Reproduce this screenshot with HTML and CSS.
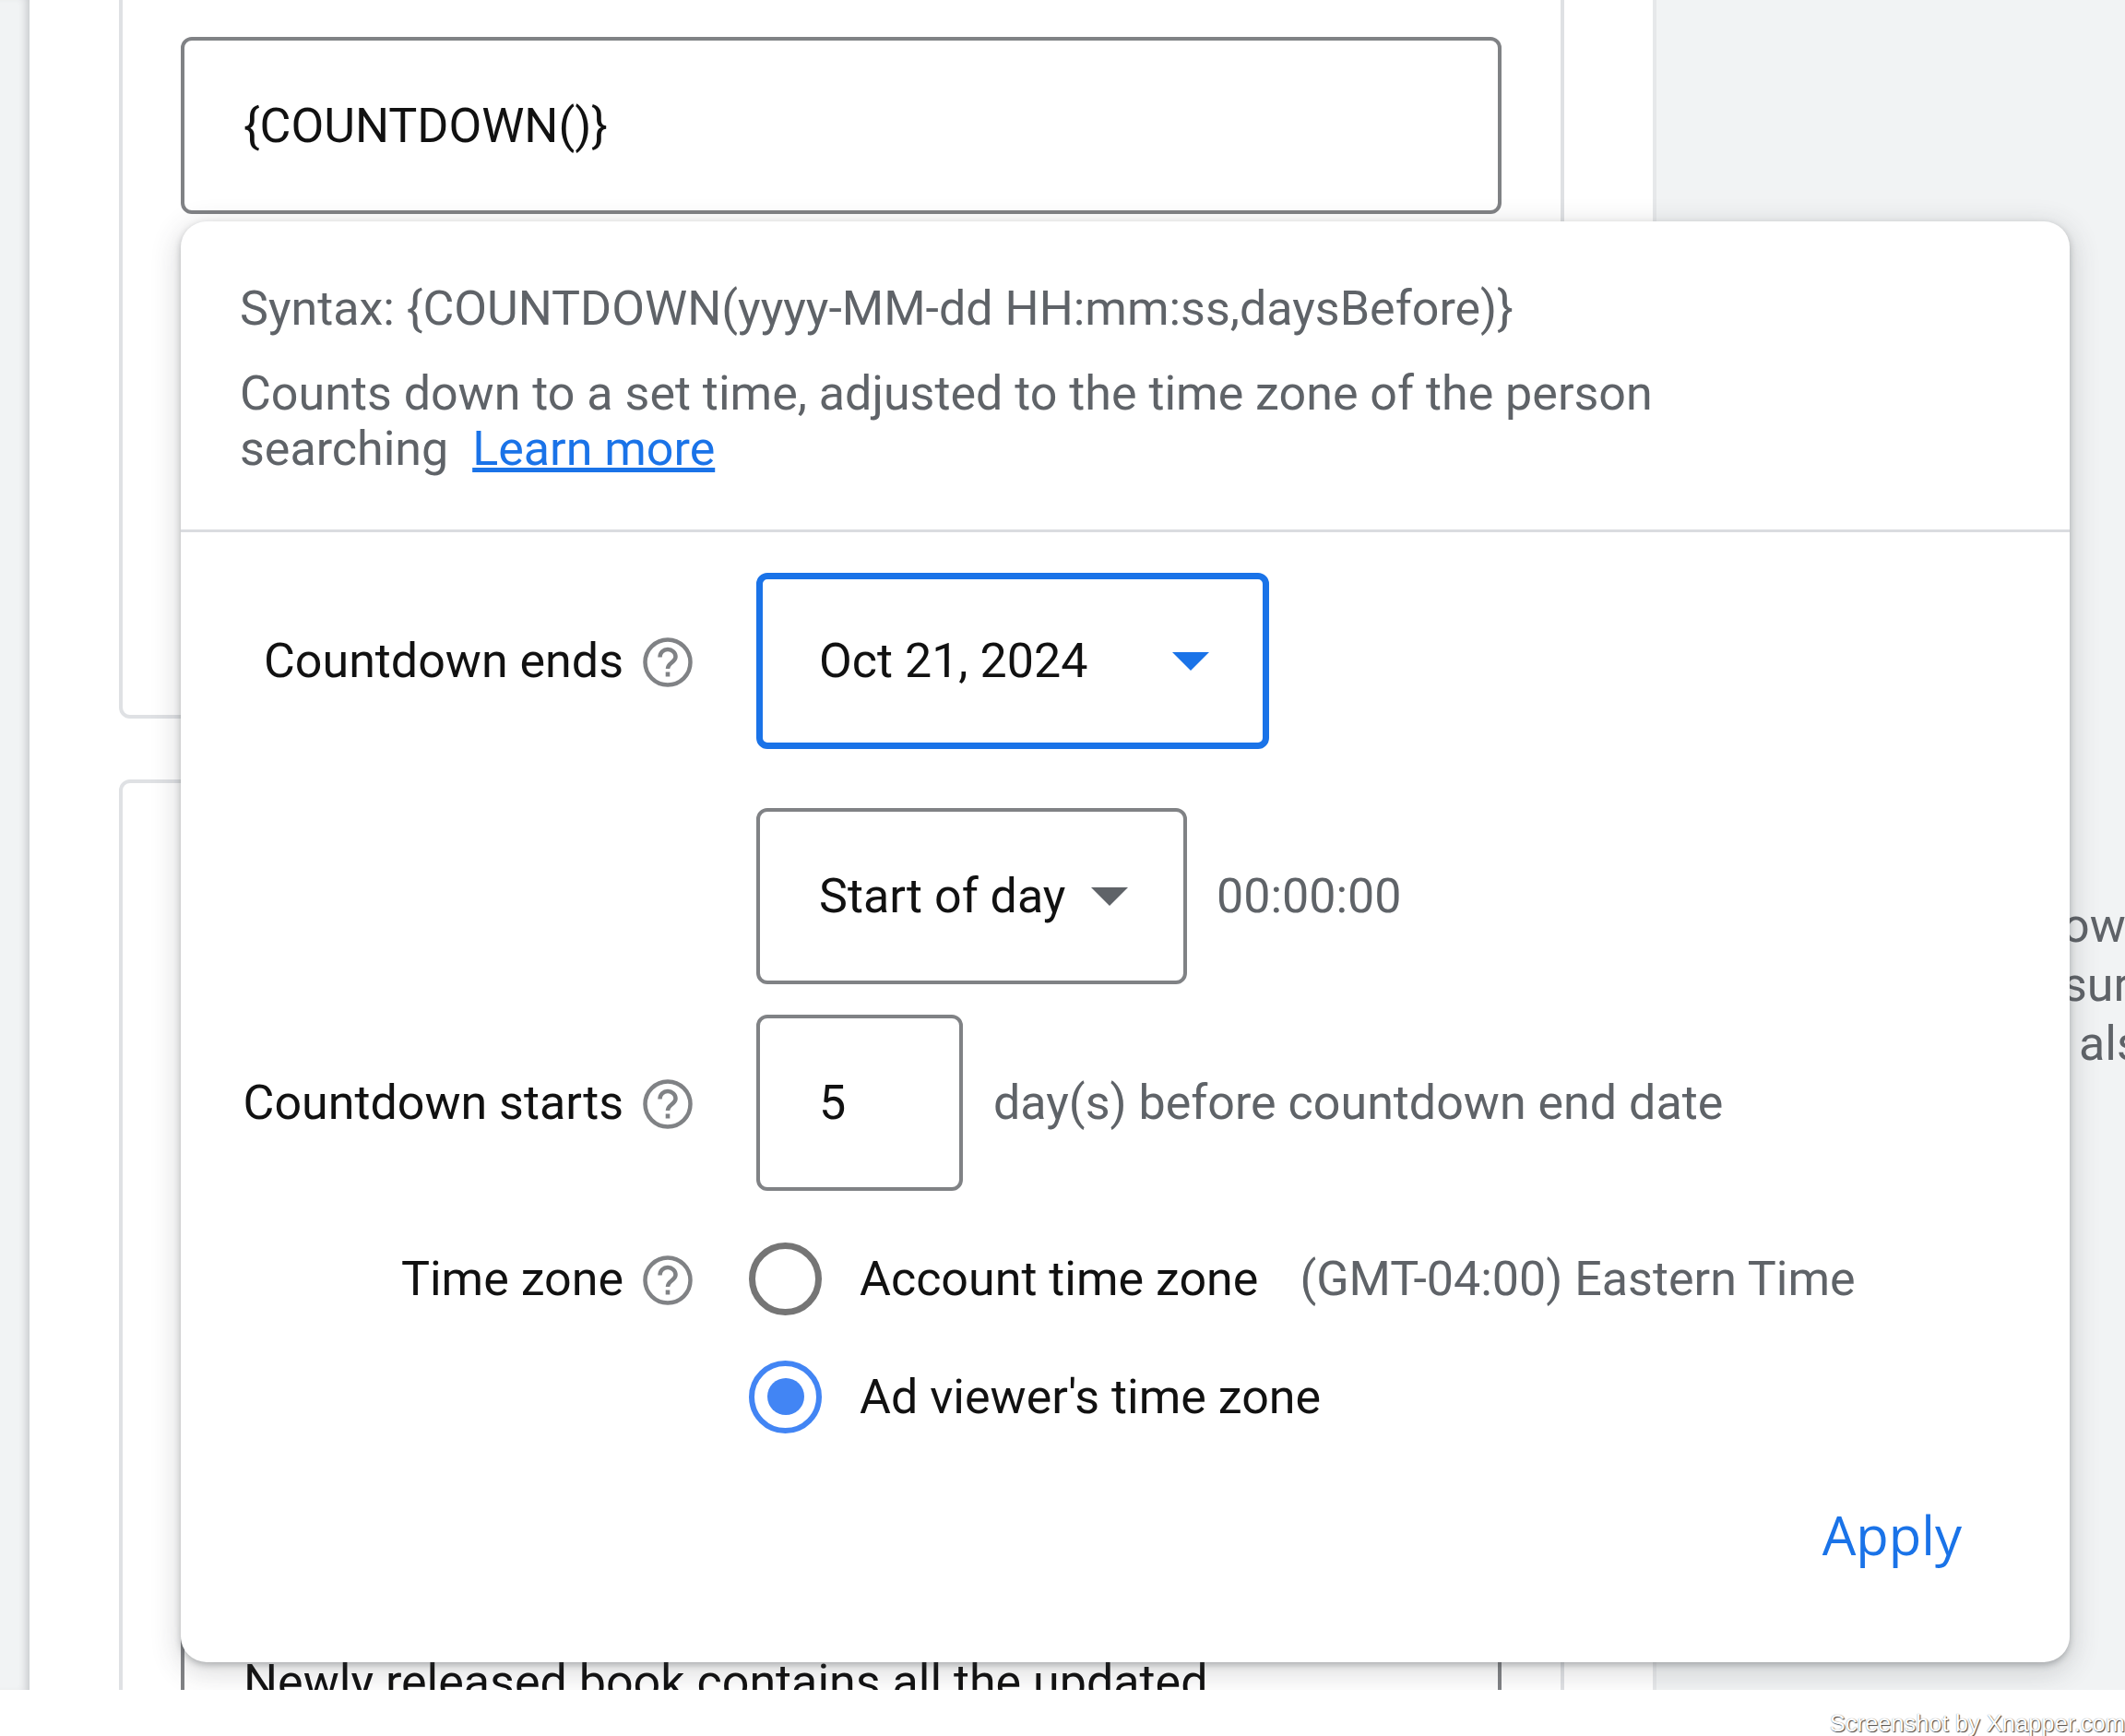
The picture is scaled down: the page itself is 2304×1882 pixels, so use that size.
FILE: index.html
```html
<!DOCTYPE html>
<html lang="en">
<head>
<meta charset="utf-8">
<title>Countdown</title>
<link rel="stylesheet" href="styles.css">
</head>
<body>
<div class="viewport">
  <div class="gutter"></div>
  <main class="main">
    <section class="card card-first">
      <div class="field field-top">{COUNTDOWN()}</div>
    </section>
    <section class="card card-second">
      <div class="field field-bottom">Newly released book contains all the updated</div>
    </section>
  </main>
  <aside class="aside">
    <div>ow</div>
    <div>sur</div>
    <div class="indent">als</div>
  </aside>
  <div class="popup">
    <header class="popup-head">
      <p class="syntax">Syntax: {COUNTDOWN(yyyy-MM-dd HH:mm:ss,daysBefore)}</p>
      <p class="desc">Counts down to a set time, adjusted to the time zone of the person<br>searching <a class="learn" href="#">Learn more</a></p>
    </header>
    <div class="form">
      <div class="row row-ends">
        <div class="label">Countdown ends <svg class="help" viewBox="0 0 54 54"><circle cx="27" cy="27" r="24.5" fill="none" stroke="#808285" stroke-width="4.5"/><path d="M18.5 21.5c0-5 3.800-8.500 8.500-8.500s8.500 3.500 8.500 8c0 6-8.500 6.500-8.500 13" fill="none" stroke="#808285" stroke-width="4.500"/><rect x="24.700" y="37.500" width="4.600" height="5" fill="#808285"/></svg></div>
        <div class="select select-date">Oct 21, 2024<span class="caret caret-blue"></span></div>
      </div>
      <div class="row row-time">
        <div class="label"></div>
        <div class="select select-time">Start of day<span class="caret"></span></div>
        <span class="muted time-value">00:00:00</span>
      </div>
      <div class="row row-starts">
        <div class="label">Countdown starts <svg class="help" viewBox="0 0 54 54"><circle cx="27" cy="27" r="24.5" fill="none" stroke="#808285" stroke-width="4.5"/><path d="M18.5 21.5c0-5 3.800-8.500 8.500-8.500s8.500 3.500 8.500 8c0 6-8.500 6.500-8.500 13" fill="none" stroke="#808285" stroke-width="4.500"/><rect x="24.700" y="37.500" width="4.600" height="5" fill="#808285"/></svg></div>
        <div class="select select-days">5</div>
        <span class="muted days-value">day(s) before countdown end date</span>
      </div>
      <div class="row row-zone">
        <div class="label">Time zone <svg class="help" viewBox="0 0 54 54"><circle cx="27" cy="27" r="24.5" fill="none" stroke="#808285" stroke-width="4.5"/><path d="M18.5 21.5c0-5 3.800-8.500 8.500-8.500s8.500 3.500 8.500 8c0 6-8.500 6.500-8.500 13" fill="none" stroke="#808285" stroke-width="4.500"/><rect x="24.700" y="37.500" width="4.600" height="5" fill="#808285"/></svg></div>
        <span class="radio"></span>
        <span class="radio-label">Account time zone</span>
        <span class="muted zone-value">(GMT-04:00) Eastern Time</span>
      </div>
      <div class="row row-viewer">
        <div class="label"></div>
        <span class="radio radio-on"></span>
        <span class="radio-label">Ad viewer's time zone</span>
      </div>
    </div>
    <footer class="popup-foot"><a class="apply" href="#">Apply</a></footer>
  </div>
</div>
<div class="credit">Screenshot by Xnapper.com</div>
</body>
</html>
```
FILE: styles.css
```css
* { box-sizing: border-box; }
html, body { margin: 0; padding: 0; background: #fff; }
body { width: 2304px; height: 1882px; overflow: hidden; font-family: Roboto, "Liberation Sans", sans-serif; color: #202124; }
.viewport { position: relative; display: flex; height: 1832px; overflow: hidden; background: #f1f3f4; }
.gutter { width: 32px; flex: none; box-shadow: inset -9px 0 10px -6px #c4c6c9; }
.main { width: 1764px; flex: none; background: #fff; border-right: 4px solid #e6e8ea; padding: 0 97px; }
.card { border: 4px solid #dfe1e4; background: #fff; padding: 0 63px; width: 1567px; }
.card-first { height: 819px; margin-top: -40px; border-radius: 0 0 12px 12px; padding-top: 76px; }
.card-second { height: 1100px; margin-top: 66px; border-radius: 12px 12px 0 0; padding-top: 800px; }
.field { border: 4px solid #808285; border-radius: 12px; height: 192px; width: 1432px; padding: 0 64px; display: flex; align-items: center; font-size: 52px; color: #111; }
.field-bottom { align-items: flex-start; padding-top: 140px; height: 300px; white-space: nowrap; }
.aside { flex: 1; padding: 972px 0 0 440px; font-size: 52px; line-height: 64px; color: #5f6368; white-space: nowrap; }
.aside .indent { padding-left: 18px; }
.popup { position: absolute; left: 196px; top: 240px; width: 2048px; height: 1562px; background: #fff; border-radius: 28px; box-shadow: 0 3px 7px rgba(60,64,67,.32), 0 8px 28px 6px rgba(60,64,67,.16); display: flex; flex-direction: column; }
.popup-head { height: 337px; border-bottom: 3px solid #dadce0; padding: 65px 64px 0; font-size: 52px; color: #5f6368; }
.syntax, .desc { margin: 0; }
.syntax { line-height: 60px; margin-bottom: 32px; }
.desc { line-height: 60px; }
.learn { color: #1a73e8; margin-left: 13px; }
.form { display: flex; flex-direction: column; padding-top: 44px; font-size: 52px; color: #111; }
.row { display: flex; align-items: center; height: 191px; }
.row-time { margin-top: 64px; }
.row-starts { margin-top: 33px; }
.row-zone { margin-top: 15px; height: 160px; }
.row-viewer { margin-top: -32px; height: 160px; }
.label { width: 624px; flex: none; display: flex; justify-content: flex-end; align-items: center; gap: 21px; white-space: nowrap; padding-right: 69px; }
.label:empty { padding: 0; }
.help { width: 54px; height: 54px; flex: none; margin-top: 3px; }
.select { height: 191px; border: 4px solid #808285; border-radius: 12px; display: flex; align-items: center; padding-left: 64px; padding-bottom: 1px; flex: none; }
.select-date { width: 556px; border: 7px solid #1a73e8; padding-left: 61px; }
.select-time { width: 467px; }
.select-days { width: 224px; }
.caret { width: 0; height: 0; border-left: 20px solid transparent; border-right: 20px solid transparent; border-top: 20px solid #5f6368; margin-top: 2px; margin-left: auto; margin-right: 60px; }
.caret-blue { border-top-color: #1a73e8; margin-right: 58px; }
.muted { color: #5f6368; white-space: nowrap; }
.time-value { margin-left: 32px; }
.days-value { margin-left: 33px; }
.zone-value { margin-left: 45px; }
.radio { width: 79px; height: 79px; border: 7px solid #757575; border-radius: 50%; flex: none; margin-left: -8px; display: flex; align-items: center; justify-content: center; }
.radio-on { border: 6px solid #4285f4; }
.radio-on::after { content: ""; width: 40px; height: 40px; border-radius: 50%; background: #4285f4; }
.radio-label { margin-left: 41px; white-space: nowrap; }
.popup-foot { margin-top: auto; padding: 0 117px 103px 0; display: flex; justify-content: flex-end; }
.apply { color: #1a73e8; font-size: 58px; font-weight: 500; font-family: "Open Sans", sans-serif; text-decoration: none; line-height: 70px; }
.credit { height: 50px; text-align: right; font-family: "Liberation Sans", sans-serif; font-size: 25.5px; line-height: 72px; color: #fff; text-shadow: 1px 1px 1px #444, 0 0 1px #777; white-space: nowrap; }
```
